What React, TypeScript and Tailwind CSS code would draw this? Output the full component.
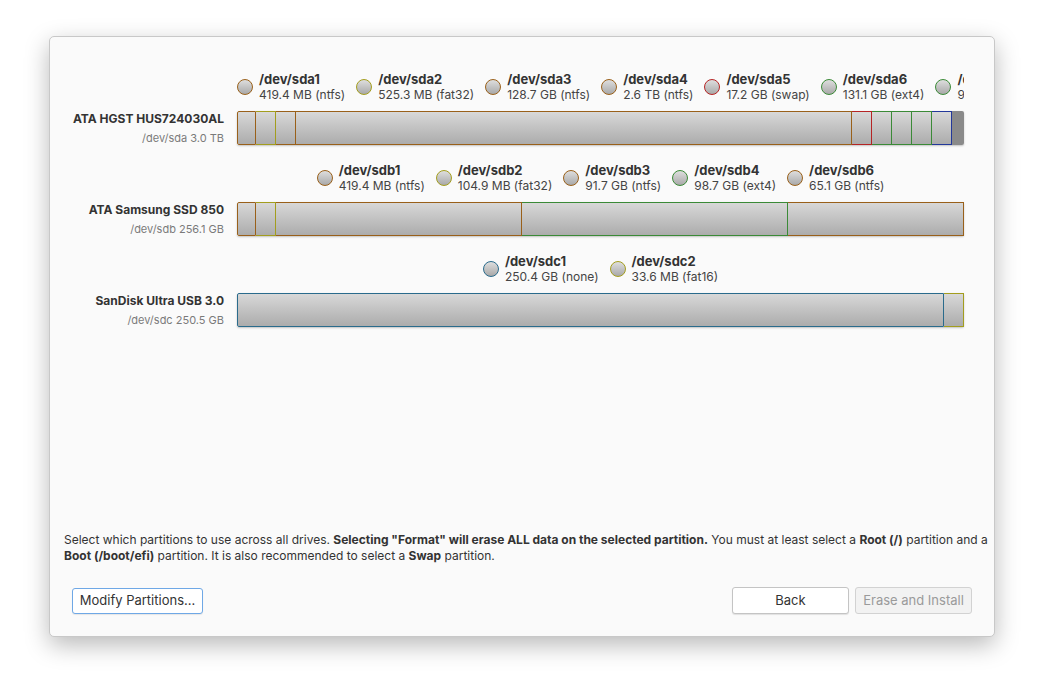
import React from "react";

type Part = { name: string; info: string; ring: string };
type Seg = { w: number; line: string };
type Disk = { model: string; sub: string; parts: Part[]; segs: Seg[] };

// fs colours: same border class for the legend dot and the bar segment
const ntfs = "border-[#99601a]";
const fat = "border-[#a39d1e]";
const swap = "border-[#b52424]";
const ext4 = "border-[#3b8a37]";
const efi = "border-[#23389a]";
const none = "border-[#2a6b8c]";

const disks: Disk[] = [
  {
    model: "ATA HGST HUS724030AL",
    sub: "/dev/sda 3.0 TB",
    parts: [
      { name: "/dev/sda1", info: "419.4 MB (ntfs)", ring: ntfs },
      { name: "/dev/sda2", info: "525.3 MB (fat32)", ring: fat },
      { name: "/dev/sda3", info: "128.7 GB (ntfs)", ring: ntfs },
      { name: "/dev/sda4", info: "2.6 TB (ntfs)", ring: ntfs },
      { name: "/dev/sda5", info: "17.2 GB (swap)", ring: swap },
      { name: "/dev/sda6", info: "131.1 GB (ext4)", ring: ext4 },
      { name: "/dev/sda7", info: "98.7 GB (ext4)", ring: ext4 },
    ],
    segs: [
      { w: 19, line: ntfs },
      { w: 20, line: fat },
      { w: 20, line: ntfs },
      { w: 556, line: ntfs },
      { w: 20, line: swap },
      { w: 20, line: ext4 },
      { w: 20, line: ext4 },
      { w: 20, line: ext4 },
      { w: 20, line: efi },
    ],
  },
  {
    model: "ATA Samsung SSD 850",
    sub: "/dev/sdb 256.1 GB",
    parts: [
      { name: "/dev/sdb1", info: "419.4 MB (ntfs)", ring: ntfs },
      { name: "/dev/sdb2", info: "104.9 MB (fat32)", ring: fat },
      { name: "/dev/sdb3", info: "91.7 GB (ntfs)", ring: ntfs },
      { name: "/dev/sdb4", info: "98.7 GB (ext4)", ring: ext4 },
      { name: "/dev/sdb6", info: "65.1 GB (ntfs)", ring: ntfs },
    ],
    segs: [
      { w: 19, line: ntfs },
      { w: 20, line: fat },
      { w: 246, line: ntfs },
      { w: 266, line: ext4 },
      { w: 176, line: ntfs },
    ],
  },
  {
    model: "SanDisk Ultra USB 3.0",
    sub: "/dev/sdc 250.5 GB",
    parts: [
      { name: "/dev/sdc1", info: "250.4 GB (none)", ring: none },
      { name: "/dev/sdc2", info: "33.6 MB (fat16)", ring: fat },
    ],
    segs: [
      { w: 707, line: none },
      { w: 20, line: fat },
    ],
  },
];

function DiskRow({ disk }: { disk: Disk }) {
  const used = disk.segs.reduce((a, s) => a + s.w, 0);
  return (
    <div className="flex flex-col">
      <div className="ml-[187px] h-[30px] w-[727px] overflow-hidden">
        <div className="mx-auto flex w-max gap-[11px]">
          {disk.parts.map((p) => (
            <div key={p.name} className="flex items-center gap-[6px]">
              <div
                className={
                  "h-[16px] w-[16px] shrink-0 rounded-full border bg-gradient-to-b from-[#dedede] to-[#a9a9a9] " +
                  p.ring
                }
              />
              <div className="flex flex-col whitespace-nowrap">
                <span className="text-[13px] leading-[15px] font-bold text-[#333]">{p.name}</span>
                <span className="text-[12px] leading-[15px] text-[#444]">{p.info}</span>
              </div>
            </div>
          ))}
        </div>
      </div>
      <div className="mt-[9px] mb-[18px] flex items-start gap-[13px]">
        <div className="flex w-[174px] flex-col items-end">
          <span className="text-[12px] leading-[15px] font-bold text-[#333]">{disk.model}</span>
          <span className="mt-[5px] text-[11px] leading-[14px] text-[#7a7a7a]">{disk.sub}</span>
        </div>
        <div className="flex h-[34px] w-[727px] rounded-[2px] shadow-[0_1px_2px_rgba(0,0,0,0.22)]">
          {disk.segs.map((s, i) => (
            <div
              key={i}
              style={{ width: s.w }}
              className={
                "h-[34px] shrink-0 border-y border-r bg-gradient-to-b from-[#d8d8d8] to-[#acacac] bg-clip-padding " +
                (i === 0 ? "rounded-l-[2px] border-l " : "") +
                s.line
              }
            />
          ))}
          {used < 727 && <div className="h-[34px] flex-1 rounded-r-[2px] bg-[#8a8a8a]" />}
        </div>
      </div>
    </div>
  );
}

export default function App() {
  return (
    <div className="h-[700px] w-full bg-white pt-[36px] pl-[49px] font-['Inter','Noto_Sans',sans-serif]">
      <div className="flex h-[601px] w-[946px] flex-col rounded-[5px] border border-[#c8c8c8] bg-[#fafafa] shadow-[0_8px_24px_rgba(0,0,0,0.28)]">
        <div className="flex flex-col pt-[35px]">
          {disks.map((d) => (
            <DiskRow key={d.model} disk={d} />
          ))}
        </div>
        <div className="flex-1" />
        <p className="pr-[2px] pl-[14px] text-[12px] leading-[16px] text-[#333]">
          Select which partitions to use across all drives.{" "}
          <b>Selecting "Format" will erase ALL data on the selected partition.</b> You must at least
          select a <b>Root (/)</b> partition and a <b>Boot (/boot/efi)</b> partition. It is also
          recommended to select a <b>Swap</b> partition.
        </p>
        <div className="mt-[23px] mb-[22px] flex items-center px-[22px]">
          <button className="h-[26px] w-[131px] rounded-[3px] border border-[#6fa8e6] bg-white text-[13px] text-[#333] shadow-[0_1px_1px_rgba(0,0,0,0.08)]">
            Modify Partitions...
          </button>
          <div className="flex-1" />
          <button className="h-[27px] w-[117px] rounded-[3px] border border-[#c4c4c4] bg-white text-[13px] text-[#333] shadow-[0_1px_1px_rgba(0,0,0,0.1)]">
            Back
          </button>
          <button className="ml-[6px] h-[27px] w-[117px] rounded-[3px] border border-[#d2d2d2] bg-[#f2f2f2] text-[13px] text-[#9a9a9a]">
            Erase and Install
          </button>
        </div>
      </div>
    </div>
  );
}
